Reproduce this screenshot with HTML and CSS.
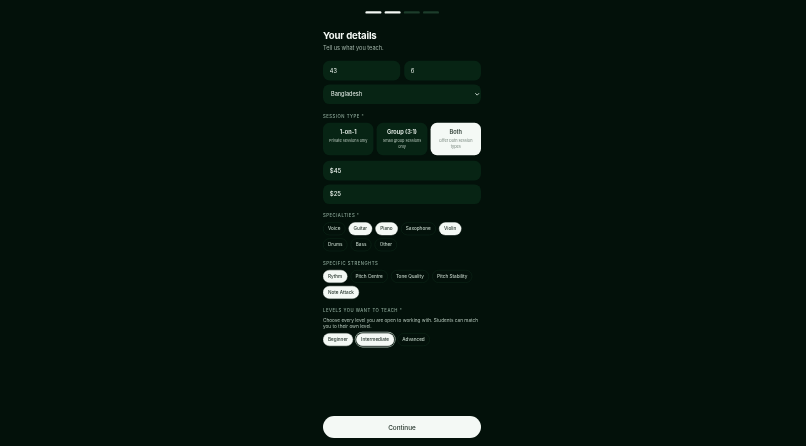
FILE: index.html
```html
<!DOCTYPE html>
<html lang="en">
<head>
<meta charset="utf-8">
<title>Your details</title>
<link rel="stylesheet" href="styles.css">
</head>
<body>
<div class="frame">
<main class="page">
  <div class="progress">
    <span class="step done"></span><span class="step done"></span><span class="step"></span><span class="step"></span>
  </div>
  <form class="form">
    <h1 class="title">Your details</h1>
    <p class="subtitle">Tell us what you teach.</p>
    <div class="row">
      <div class="field">43</div>
      <div class="field">6</div>
    </div>
    <div class="field select">
      <span>Bangladesh</span>
      <svg class="chev" viewBox="0 0 10 10" width="13" height="13"><path d="M1.5 3.2 5 6.8 8.5 3.2" fill="none" stroke="#e6efe9" stroke-width="1.7"/></svg>
    </div>
    <div class="label">SESSION TYPE *</div>
    <div class="cards">
      <div class="card"><strong>1-on-1</strong><small>Private sessions only</small></div>
      <div class="card"><strong>Group (3:1)</strong><small>Small group sessions only</small></div>
      <div class="card on"><strong>Both</strong><small>Offer both session types</small></div>
    </div>
    <div class="field price">$45</div>
    <div class="field price">$25</div>
    <div class="label">SPECIALTIES *</div>
    <div class="chips">
      <span class="chip">Voice</span><span class="chip on">Guitar</span><span class="chip on">Piano</span><span class="chip">Saxophone</span><span class="chip on">Violin</span>
      <span class="chip">Drums</span><span class="chip">Bass</span><span class="chip">Other</span>
    </div>
    <div class="label">SPECIFIC STRENGHTS</div>
    <div class="chips">
      <span class="chip on">Rythm</span><span class="chip">Pitch Centre</span><span class="chip">Tone Quality</span><span class="chip">Pitch Stability</span>
      <span class="chip on">Note Attack</span>
    </div>
    <div class="label">LEVELS YOU WANT TO TEACH *</div>
    <p class="help">Choose every level you are open to working with. Students can match you to their own level.</p>
    <div class="chips after-help">
      <span class="chip on">Beginner</span><span class="chip on focus">Intermediate</span><span class="chip">Advanced</span>
    </div>
  </form>
  <button class="continue" type="button">Continue</button>
</main>
</div>
</body>
</html>
```

FILE: styles.css
```css
* { box-sizing: border-box; }
html, body { margin: 0; height: 100%; overflow: hidden; }
body {
  background: #03110a;
  color: #eef5f0;
  font-family: Inter, "Liberation Sans", sans-serif;
}
.frame { height: 446px; overflow: hidden; }
.page {
  width: 395px;
  height: 1115px;
  margin-left: 323px;
  display: flex;
  flex-direction: column;
  transform: scale(0.4);
  transform-origin: 0 0;
  filter: blur(0.85px);
}
.progress {
  display: flex;
  justify-content: center;
  gap: 8px;
  padding-top: 28px;
}
.step {
  width: 40px;
  height: 6px;
  border-radius: 3px;
  background: #1d3d2b;
}
.step.done { background: #f3f8f4; }
.form { flex: 1; display: flex; flex-direction: column; }
.title {
  margin: 39px 0 0;
  font-size: 24px;
  line-height: 32px;
  font-weight: 700;
  letter-spacing: -0.4px;
  color: #f2f7f3;
}
.subtitle {
  margin: 3px 0 0;
  font-size: 14px;
  line-height: 22px;
  color: #a2b5a9;
}
.row { display: flex; gap: 10px; margin-top: 22px; }
.row .field { flex: 1; }
.field {
  height: 49px;
  border-radius: 16px;
  background: #072414;
  padding: 0 17px;
  display: flex;
  align-items: center;
  font-size: 14px;
  color: #e6efe9;
}
.select {
  margin-top: 10px;
  padding: 0 3px 0 20px;
  justify-content: space-between;
}
.price { margin-top: 10px; font-size: 15px; font-weight: 500; }
.cards + .price { margin-top: 14px; }
.label {
  margin-top: 21.5px;
  font-size: 10.5px;
  line-height: 18px;
  letter-spacing: 1.35px;
  font-weight: 500;
  color: #8aa596;
}
.cards { display: flex; gap: 8px; margin-top: 7px; }
.card {
  flex: 1 1 0;
  min-width: 0;
  height: 81px;
  border-radius: 16px;
  background: #072414;
  padding: 13px 10px 0;
  display: flex;
  flex-direction: column;
  align-items: center;
  text-align: center;
}
.card strong { font-size: 14px; line-height: 20px; font-weight: 600; color: #eef5f0; }
.card small { font-size: 9.6px; line-height: 15px; margin-top: 3px; color: #b4c4b9; }
.card.on { background: #f4f9f5; }
.card.on strong { color: #2a3a31; }
.card.on small { color: #76857c; }
.chips { display: flex; flex-wrap: wrap; gap: 8px; margin-top: 7px; }
.chip {
  height: 32px;
  padding: 0 11.5px;
  border-radius: 16px;
  border: 1px solid #12301f;
  display: flex;
  align-items: center;
  font-size: 11.6px;
  font-weight: 500;
  color: #b8c8bd;
}
.chip.on { background: #f4f9f5; border-color: #f4f9f5; color: #2c3b33; }
.chip.focus { box-shadow: 0 0 0 2px #03110a, 0 0 0 3.5px #a9bbaf; }
.help {
  margin: 5.5px 0 0;
  font-size: 11.75px;
  line-height: 17px;
  color: #afc0b5;
}
.after-help { margin-top: 7.5px; }
.continue {
  height: 55px;
  margin-bottom: 20px;
  border: 0;
  border-radius: 28px;
  background: #f4f9f5;
  color: #26352c;
  font: 500 16px Inter, "Liberation Sans", sans-serif;
}
```
